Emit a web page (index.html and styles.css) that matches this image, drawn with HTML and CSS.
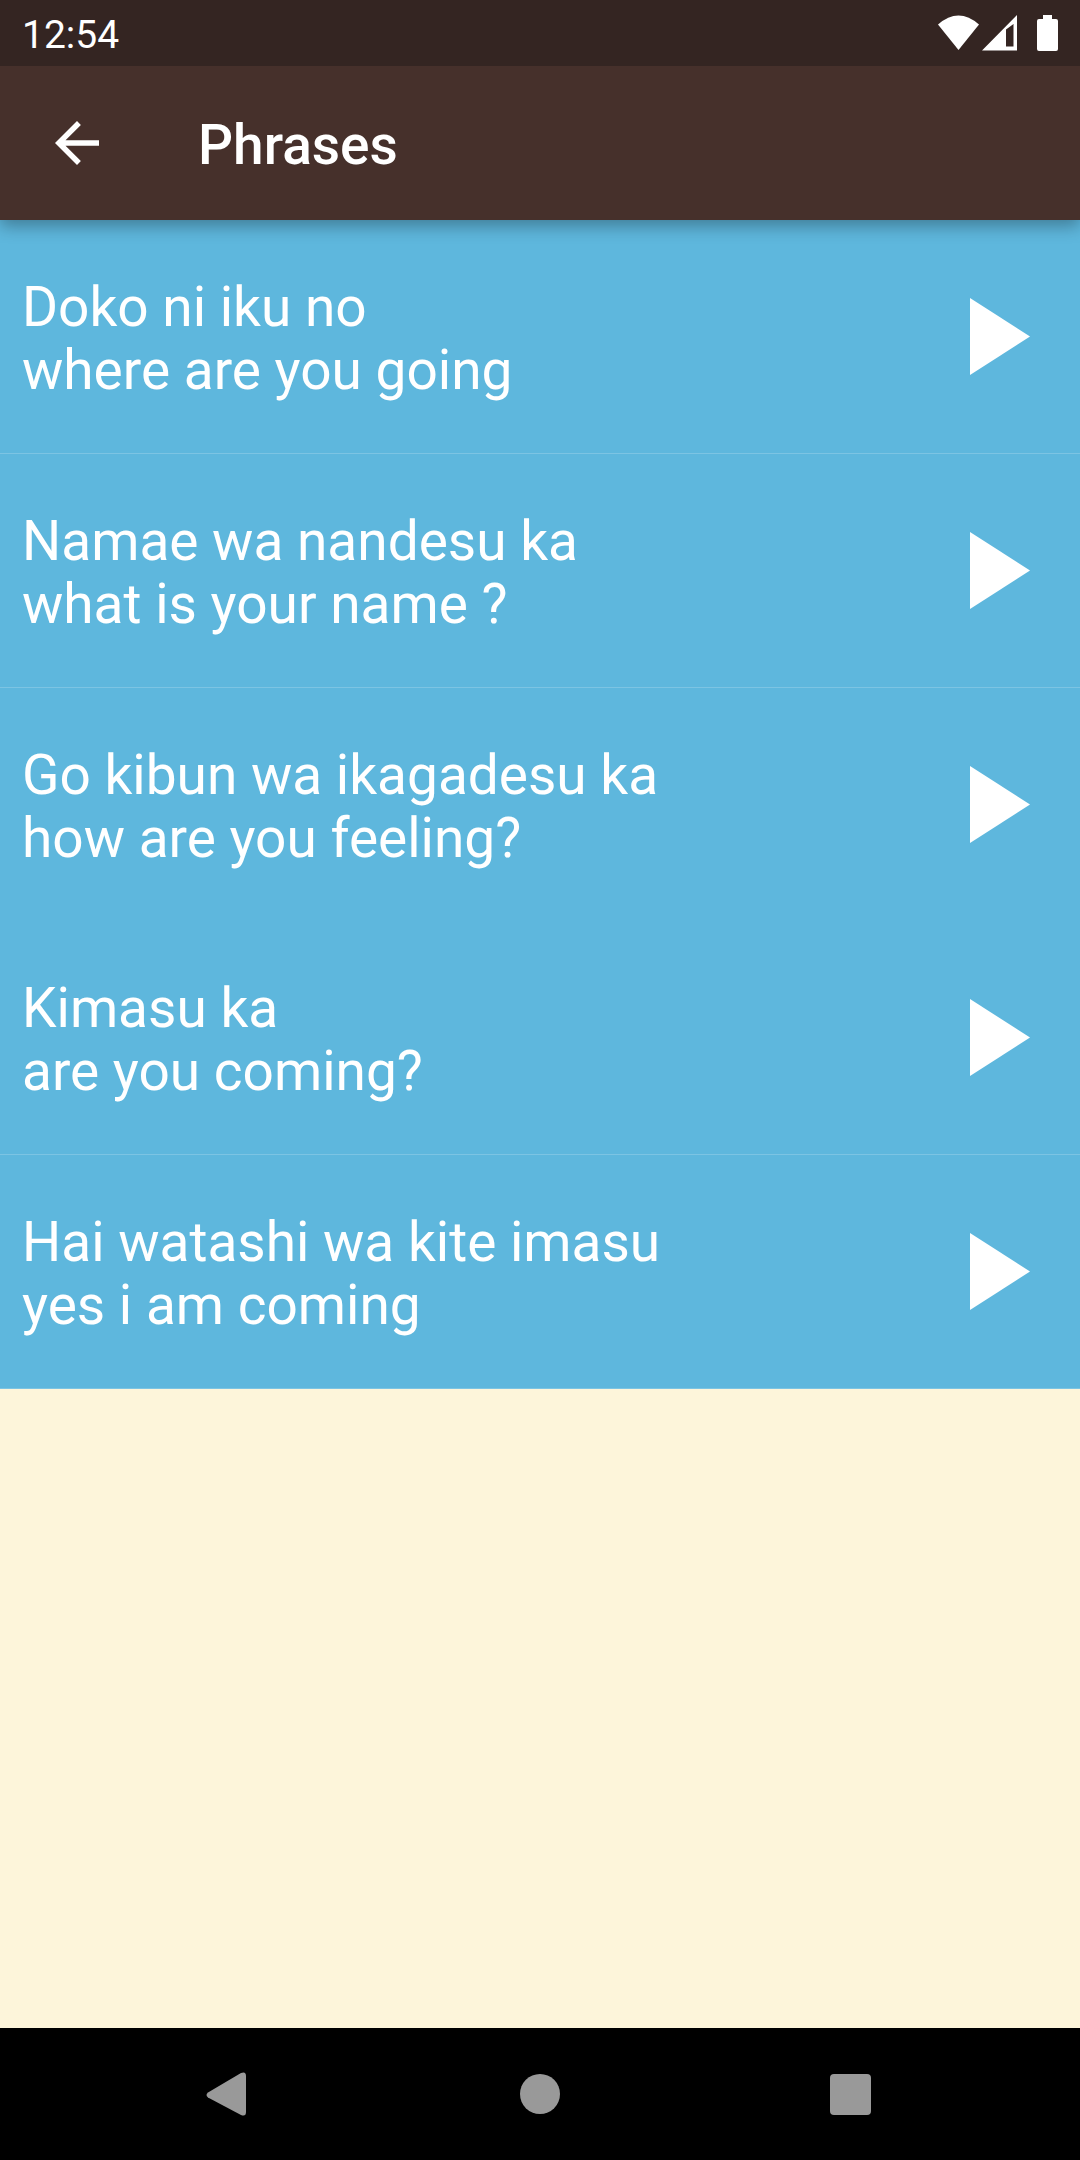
FILE: index.html
```html
<!DOCTYPE html>
<html lang="en">
<head>
<meta charset="utf-8">
<meta name="viewport" content="width=device-width, initial-scale=1">
<title>Phrases</title>
<link rel="stylesheet" href="styles.css">
</head>
<body>
<div class="status-bar">
  <time class="clock">12:54</time>
  <svg class="status-icons" viewBox="0 0 122 40" aria-hidden="true">
    <path d="M0 9.500Q20.500-8.500 41 9.500L20.500 35z"/>
    <path fill-rule="evenodd" d="M44 35.500L79 0V35.500zM68 14.500V31.500H75.500V9z"/>
    <path d="M105 0h9v4h4q2 0 2 2v28q0 2-2 2h-17q-2 0-2-2V6q0-2 2-2h4z"/>
  </svg>
</div>
<header class="app-bar">
  <button class="back" type="button" aria-label="Back">
    <svg class="back-icon" viewBox="4 4 16 16" aria-hidden="true"><path d="M20 11H7.830l5.590-5.590L12 4l-8 8 8 8 1.410-1.410L7.830 13H20v-2z"/></svg>
  </button>
  <h1 class="title">Phrases</h1>
</header>
<main class="content">
  <ul class="phrases">
    <li class="phrase">
      <p class="words">Doko ni iku no<br>where are you going</p>
      <button class="play" type="button" aria-label="Play Doko ni iku no"><svg class="play-icon" viewBox="0 0 60 77"><path d="M0 0l60 38.500L0 77z"/></svg></button>
    </li>
    <li class="phrase">
      <p class="words">Namae wa nandesu ka<br>what is your name ?</p>
      <button class="play" type="button" aria-label="Play Namae wa nandesu ka"><svg class="play-icon" viewBox="0 0 60 77"><path d="M0 0l60 38.500L0 77z"/></svg></button>
    </li>
    <li class="phrase undivided">
      <p class="words">Go kibun wa ikagadesu ka<br>how are you feeling?</p>
      <button class="play" type="button" aria-label="Play Go kibun wa ikagadesu ka"><svg class="play-icon" viewBox="0 0 60 77"><path d="M0 0l60 38.500L0 77z"/></svg></button>
    </li>
    <li class="phrase">
      <p class="words">Kimasu ka<br>are you coming?</p>
      <button class="play" type="button" aria-label="Play Kimasu ka"><svg class="play-icon" viewBox="0 0 60 77"><path d="M0 0l60 38.500L0 77z"/></svg></button>
    </li>
    <li class="phrase">
      <p class="words">Hai watashi wa kite imasu<br>yes i am coming</p>
      <button class="play" type="button" aria-label="Play Hai watashi wa kite imasu"><svg class="play-icon" viewBox="0 0 60 77"><path d="M0 0l60 38.500L0 77z"/></svg></button>
    </li>
  </ul>
</main>
<nav class="nav-bar" aria-label="System">
  <button class="nav-button" type="button" aria-label="Back"><svg class="nav-icon" viewBox="0 0 46 46"><path d="M4 21.500L37 2q5-2 5 3v36q0 5-5 3L4 26.500q-3-2.500 0-5z"/></svg></button>
  <button class="nav-button" type="button" aria-label="Home"><svg class="nav-icon" viewBox="0 0 46 46"><circle cx="23" cy="23" r="20"/></svg></button>
  <button class="nav-button" type="button" aria-label="Recent apps"><svg class="nav-icon" viewBox="0 0 46 46"><rect x="0" y="3" width="41" height="41" rx="4"/></svg></button>
</nav>
</body>
</html>
```
FILE: styles.css
```css
* {
  box-sizing: border-box;
}

body {
  margin: 0;
  min-height: 100vh;
  display: flex;
  flex-direction: column;
  background: #fdf5da;
  color: #fff;
  font-family: Roboto, sans-serif;
}

button {
  display: flex;
  align-items: center;
  justify-content: center;
  padding: 0;
  border: 0;
  background: none;
  color: inherit;
}

svg {
  display: block;
  fill: currentColor;
}

.status-bar {
  position: relative;
  z-index: 2;
  display: flex;
  align-items: center;
  justify-content: space-between;
  height: 66px;
  padding: 4px 20px 0 22px;
  background: #342522;
}

.clock {
  font-size: 39px;
  line-height: 48px;
}

.status-icons {
  width: 122px;
  height: 40px;
}

.app-bar {
  position: relative;
  z-index: 1;
  display: flex;
  align-items: center;
  gap: 44px;
  height: 154px;
  background: #46302b;
  box-shadow: 0 6px 16px rgba(0, 0, 0, 0.32);
}

.back {
  width: 154px;
  height: 154px;
}

.back-icon {
  width: 44px;
  height: 44px;
}

.title {
  margin: 0;
  padding-top: 4px;
  font-size: 55px;
  font-weight: 500;
  line-height: 64px;
}

.content {
  flex: 1;
}

.phrases {
  margin: 0;
  padding: 0;
  list-style: none;
}

.phrase {
  display: flex;
  align-items: center;
  justify-content: space-between;
  padding: 51px 50px 51px 22px;
  background: #5eb7dd;
  border-bottom: 1px solid #7cc4e3;
}

.undivided {
  border-bottom: 0;
}

.words {
  margin: 0;
  padding-top: 5px;
  font-size: 55px;
  line-height: 63px;
}

.play-icon {
  width: 60px;
  height: 77px;
}

.nav-bar {
  display: flex;
  align-items: center;
  justify-content: center;
  height: 132px;
  padding: 0 70px;
  background: #000;
  color: #999;
}

.nav-button {
  flex: 1;
  height: 132px;
}

.nav-icon {
  width: 46px;
  height: 46px;
}
```
